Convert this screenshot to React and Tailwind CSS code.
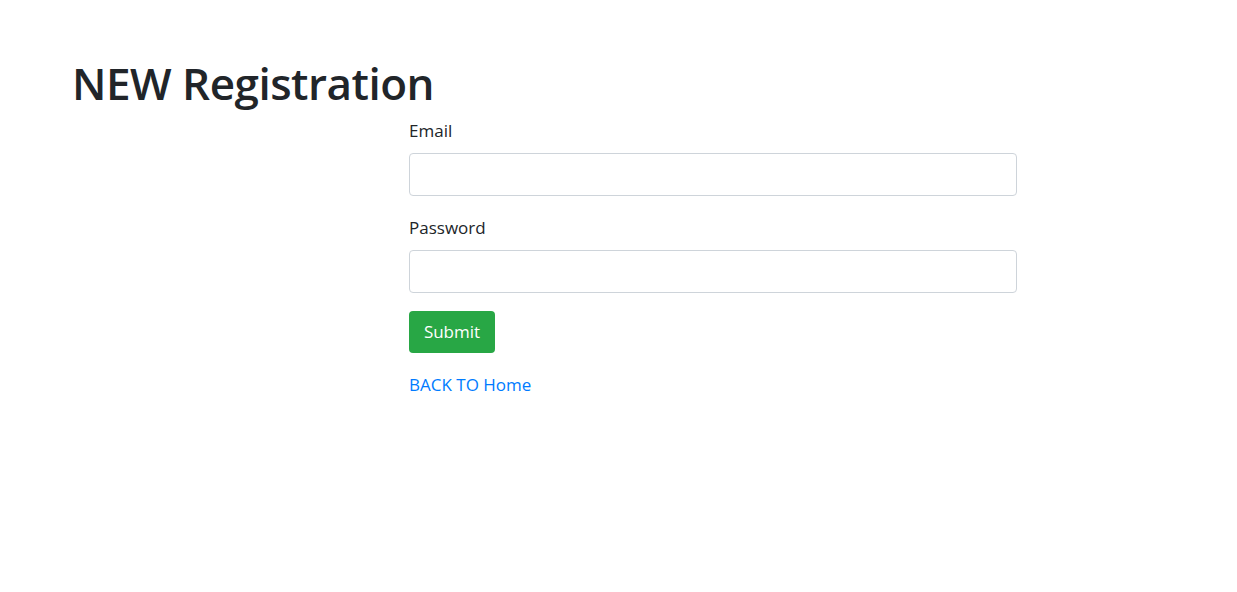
import React, { useState } from 'react';

const App = () => {
    const [email, setEmail] = useState("");
    const [password, setPassword] = useState("");

    return (
        <div className="min-h-screen bg-white text-[#212529] font-['Open_Sans','Noto_Sans',sans-serif] pt-[56px]">
            <h1 className="pl-[72px] text-[44px] leading-[54px] font-semibold tracking-[-0.5px] mb-[7px]">NEW Registration</h1>

            <form className="ml-[409px] w-[608px]" onSubmit={(e) => e.preventDefault()}>
                <div className="mb-[18px]">
                    <label className="block text-[17px] leading-[27px] mb-[9px]">Email</label>
                    <input
                        type="email"
                        value={email}
                        onChange={(e) => setEmail(e.target.value)}
                        className="block w-full h-[43px] px-3 border border-[#ced4da] rounded-[4px] text-[17px]"
                    />
                </div>
                <div className="mb-[18px]">
                    <label className="block text-[17px] leading-[27px] mb-[9px]">Password</label>
                    <input
                        type="password"
                        value={password}
                        onChange={(e) => setPassword(e.target.value)}
                        className="block w-full h-[43px] px-3 border border-[#ced4da] rounded-[4px] text-[17px]"
                    />
                </div>
                <button type="submit" className="h-[42px] w-[86px] bg-[#28a745] text-white text-[17px] rounded-[4px]">Submit</button>
                <div className="mt-[18px]">
                    <a href="#" className="text-[#007bff] text-[17px] leading-[27px]">BACK TO Home</a>
                </div>
            </form>
        </div>
    );
};

export default App;
